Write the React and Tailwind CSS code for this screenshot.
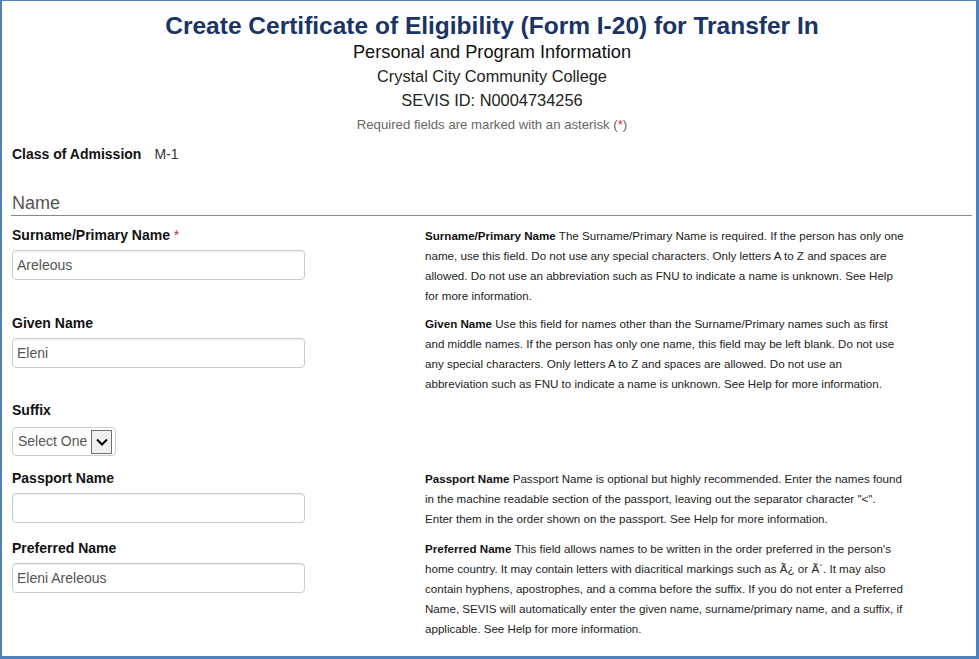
import React from 'react';

const font = { fontFamily: '"Liberation Sans", Arial, sans-serif' };

const rows = [
    {
        label: 'Surname/Primary Name',
        required: true,
        value: 'Areleous',
        helpTitle: 'Surname/Primary Name',
        help: 'The Surname/Primary Name is required. If the person has only one name, use this field. Do not use any special characters. Only letters A to Z and spaces are allowed. Do not use an abbreviation such as FNU to indicate a name is unknown. See Help for more information.',
        pad: 'pb-[8px]',
    },
    {
        label: 'Given Name',
        value: 'Eleni',
        helpTitle: 'Given Name',
        help: 'Use this field for names other than the Surname/Primary names such as first and middle names. If the person has only one name, this field may be left blank. Do not use any special characters. Only letters A to Z and spaces are allowed. Do not use an abbreviation such as FNU to indicate a name is unknown. See Help for more information.',
        pad: 'pb-[7px]',
    },
    { label: 'Suffix', select: true, pad: 'pb-[13px]' },
    {
        label: 'Passport Name',
        value: '',
        helpTitle: 'Passport Name',
        help: 'Passport Name is optional but highly recommended. Enter the names found in the machine readable section of the passport, leaving out the separator character "<". Enter them in the order shown on the passport. See Help for more information.',
        pad: 'pb-[10px]',
    },
    {
        label: 'Preferred Name',
        value: 'Eleni Areleous',
        helpTitle: 'Preferred Name',
        help: "This field allows names to be written in the order preferred in the person's home country. It may contain letters with diacritical markings such as Ã¿ or Ã`. It may also contain hyphens, apostrophes, and a comma before the suffix. If you do not enter a Preferred Name, SEVIS will automatically enter the given name, surname/primary name, and a suffix, if applicable. See Help for more information.",
        pad: 'pb-[8px]',
    },
];

const FieldRow = ({ row }) => (
    <div className={`flex items-start ${row.pad}`}>
        <div className="w-[423px] shrink-0 pl-[10px]">
            <div className="text-[14px] leading-[18px] font-bold text-[#111]">
                {row.label}
                {row.required && <span className="text-[#c9302c] font-normal"> *</span>}
            </div>
            {row.select ? (
                <div className="mt-[8px] w-[104px] h-[29px] rounded-[4px] border border-[#ccc] flex items-center pl-[5px] pr-[3px]">
                    <span className="text-[14px] text-[#555] flex-1">Select One</span>
                    <span className="w-[21px] h-[24px] border border-[#707070] bg-[#f0f0f0] flex items-center justify-center">
                        <svg width="12" height="8" viewBox="0 0 12 8">
                            <path d="M1 1.5 L6 6.5 L11 1.5" fill="none" stroke="#000" strokeWidth="2" />
                        </svg>
                    </span>
                </div>
            ) : (
                <div className="mt-[6px] w-[293px] h-[30px] rounded-[4px] border border-[#ccc] shadow-[inset_0_1px_1px_rgba(0,0,0,0.075)] flex items-center px-[4px]">
                    <span className="text-[14px] text-[#555]">{row.value}</span>
                </div>
            )}
        </div>
        {row.help && (
            <p className="w-[481px] text-[11.6px] leading-[20px] text-[#222]">
                <span className="font-bold text-[#111]">{row.helpTitle}</span> {row.help}
            </p>
        )}
    </div>
);

export default function App() {
    return (
        <div style={font} className="w-[979px] h-[659px] bg-white border-t border-l-2 border-r-[3px] border-b-[3px] border-[#4f81bd] overflow-hidden">
            <div className="flex flex-col items-center pt-[10px] pl-[6px]">
                <h1 className="text-[24.5px] leading-[29px] font-bold text-[#1a3466]">
                    Create Certificate of Eligibility (Form I-20) for Transfer In
                </h1>
                <div className="text-[18.2px] leading-[24px] text-[#111]">Personal and Program Information</div>
                <div className="text-[16.3px] leading-[24px] text-[#222]">Crystal City Community College</div>
                <div className="text-[16.4px] leading-[24px] text-[#222]">SEVIS ID: N0004734256</div>
                <div className="text-[13.2px] leading-[25px] text-[#666]">
                    Required fields are marked with an asterisk (<span className="text-[#c9302c]">*</span>)
                </div>
            </div>

            <div className="pl-[10px] mt-[8px] text-[14px] leading-[18px] flex gap-[13px]">
                <span className="font-bold text-[#111]">Class of Admission</span>
                <span className="text-[#333]">M-1</span>
            </div>

            <div className="ml-[9px] mr-[4px] mt-[28px] border-b border-[#888] pl-[1px]">
                <h2 className="text-[18px] leading-[24px] text-[#555]">Name</h2>
            </div>

            <div className="pt-[10px]">
                {rows.map((row) => (
                    <FieldRow key={row.label} row={row} />
                ))}
            </div>
        </div>
    );
}
